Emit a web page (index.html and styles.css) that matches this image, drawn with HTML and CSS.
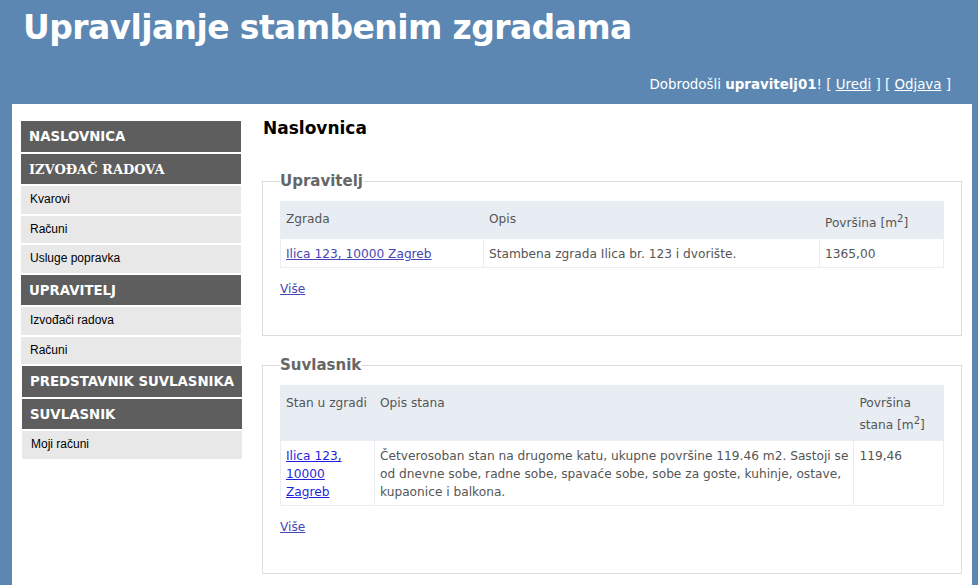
FILE: index.html
```html
<!DOCTYPE html>
<html lang="hr">
<head>
<meta charset="utf-8">
<title>Upravljanje stambenim zgradama</title>
<link rel="stylesheet" href="styles.css">
</head>
<body>
<header class="top">
  <h1 class="site-title">Upravljanje stambenim zgradama</h1>
  <div class="welcome">Dobrodošli <b>upravitelj01</b>! [ <a href="#">Uredi</a> ] [ <a href="#">Odjava</a> ]</div>
</header>
<div class="page">
  <nav class="menu">
    <div class="menu-head">NASLOVNICA</div>
    <div class="menu-head serif">IZVOĐAČ RADOVA</div>
    <div class="menu-item">Kvarovi</div>
    <div class="menu-item">Računi</div>
    <div class="menu-item">Usluge popravka</div>
    <div class="menu-head">UPRAVITELJ</div>
    <div class="menu-item">Izvođači radova</div>
    <div class="menu-item">Računi</div>
    <div class="menu-head shift">PREDSTAVNIK SUVLASNIKA</div>
    <div class="menu-head shift">SUVLASNIK</div>
    <div class="menu-item shift">Moji računi</div>
  </nav>
  <main class="content">
    <h2 class="page-title">Naslovnica</h2>
    <fieldset class="box">
      <legend>Upravitelj</legend>
      <table class="grid">
        <tr><th class="c1a">Zgrada</th><th class="c2a">Opis</th><th>Površina [m<sup>2</sup>]</th></tr>
        <tr><td><a class="visited" href="#">Ilica 123, 10000 Zagreb</a></td><td>Stambena zgrada Ilica br. 123 i dvorište.</td><td>1365,00</td></tr>
      </table>
      <p class="more"><a class="visited" href="#">Više</a></p>
    </fieldset>
    <fieldset class="box">
      <legend>Suvlasnik</legend>
      <table class="grid">
        <tr><th class="c1b">Stan u zgradi</th><th class="c2b">Opis stana</th><th>Površina<br>stana [m<sup>2</sup>]</th></tr>
        <tr><td><a class="fresh" href="#">Ilica 123,<br>10000<br>Zagreb</a></td><td>Četverosoban stan na drugome katu, ukupne površine 119.46 m2. Sastoji se<br>od dnevne sobe, radne sobe, spavaće sobe, sobe za goste, kuhinje, ostave,<br>kupaonice i balkona.</td><td>119,46</td></tr>
      </table>
      <p class="more"><a class="visited" href="#">Više</a></p>
    </fieldset>
  </main>
</div>
</body>
</html>
```
FILE: styles.css
```css
html, body {
  margin: 0;
  padding: 0;
}
body {
  background: #5b87b2;
  font-family: "DejaVu Sans", Verdana, sans-serif;
  color: #555;
}
.top {
  height: 104px;
  box-sizing: border-box;
  padding: 8px 27px 0 23px;
  display: flex;
  flex-direction: column;
  justify-content: space-between;
  color: #fff;
}
.site-title {
  margin: 0;
  font-size: 33px;
  letter-spacing: -0.6px;
  line-height: 40px;
  font-weight: bold;
  color: #fff;
}
.welcome {
  text-align: right;
  font-size: 13.4px;
  line-height: 16px;
  padding-bottom: 11px;
  color: #fff;
}
.welcome a {
  color: #fff;
}
.page {
  background: #fff;
  margin: 0 6px 0 12px;
  display: flex;
  min-height: 481px;
}
.menu {
  width: 220px;
  margin: 17px 0 0 9px;
  flex: none;
}
.menu-head {
  background: #5e5e5e;
  color: #fff;
  font-weight: bold;
  font-size: 13.3px;
  height: 30.5px;
  box-sizing: border-box;
  padding: 2px 0 0 8px;
  line-height: 28.5px;
  margin-bottom: 2px;
  white-space: nowrap;
}
.menu-head.serif {
  font-family: "DejaVu Serif", Georgia, serif;
  font-size: 13px;
}
.menu-item {
  background: #e8e8e8;
  color: #000;
  font-family: "Liberation Sans", Arial, sans-serif;
  font-size: 12px;
  height: 27.5px;
  box-sizing: border-box;
  padding: 0 0 0 9px;
  line-height: 27px;
  margin-bottom: 2px;
}
.shift {
  position: relative;
  left: 1px;
}
.content {
  flex: 1;
  margin: 0 10px 0 21px;
}
.page-title {
  margin: 14px 0 0 1px;
  font-size: 17px;
  line-height: 20px;
  color: #000;
}
.box {
  border: 1px solid #ddd;
  margin: 34px 0 20px;
  padding: 11px 17px 0;
}
.box + .box {
  margin-top: 16px;
}
.box legend {
  padding: 0;
  font-weight: bold;
  font-size: 15px;
  line-height: 18px;
  color: #666;
}
.grid {
  width: 100%;
  border-collapse: collapse;
  font-size: 12.2px;
  line-height: 18px;
  color: #555;
}
.grid th {
  background: #e8edf3;
  font-weight: normal;
  text-align: left;
  vertical-align: top;
  padding: 8px 5px 6px;
  border: 1px solid #e8edf3;
  white-space: nowrap;
}
.grid td {
  text-align: left;
  vertical-align: top;
  padding: 6px 5px 4px;
  border: 1px solid #e8edf3;
  white-space: nowrap;
}
.grid sup {
  font-size: 10px;
}
.c1a { width: 192px; }
.c2a { width: 325px; }
.c1b { width: 83px; }
.c2b { width: 468px; }
a.visited {
  color: #4646b4;
}
a.fresh {
  color: #1f1fe0;
}
.more {
  margin: 13px 0 38px;
  font-size: 12.2px;
  line-height: 16px;
}
```
